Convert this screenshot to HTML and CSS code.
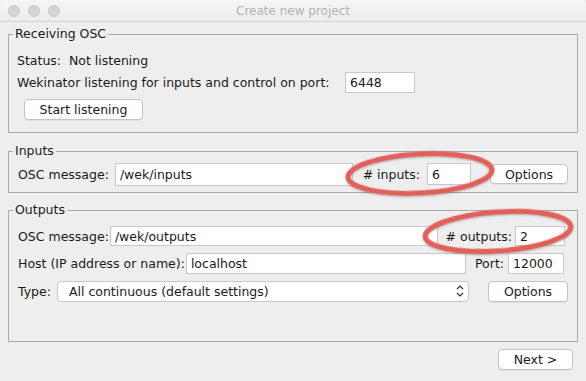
FILE: index.html
```html
<!DOCTYPE html>
<html lang="en">

<head>
    <meta charset="UTF-8">
    <title>Create new project</title>
    <link rel="stylesheet" href="styles.css">
</head>

<body>
    <div class="window">
        <div class="titlebar">
            <div class="lights">
                <span class="light"></span>
                <span class="light"></span>
                <span class="light"></span>
            </div>
            <div class="title">Create new project</div>
        </div>

        <fieldset class="group receiving">
            <legend>Receiving OSC</legend>
            <div class="row status">Status:&nbsp; Not listening</div>
            <div class="row">
                <span class="label wek">Wekinator listening for inputs and control on port:</span>
                <input class="field port-in" type="text" value="6448">
            </div>
            <div class="row btn-row">
                <button class="btn start">Start listening</button>
            </div>
        </fieldset>

        <fieldset class="group inputs">
            <legend>Inputs</legend>
            <div class="row">
                <span class="label first">OSC message:</span>
                <input class="field grow in-msg" type="text" value="/wek/inputs">
                <span class="label num-in">#&nbsp;inputs:</span>
                <input class="field num-field" type="text" value="6">
                <button class="btn opt-in">Options</button>
            </div>
        </fieldset>

        <fieldset class="group outputs">
            <legend>Outputs</legend>
            <div class="row">
                <span class="label first">OSC message:</span>
                <input class="field grow out-msg" type="text" value="/wek/outputs">
                <span class="label num-out">#&nbsp;outputs:</span>
                <input class="field num-out-field" type="text" value="2">
            </div>
            <div class="row">
                <span class="label first">Host (IP address or name):</span>
                <input class="field grow host" type="text" value="localhost">
                <span class="label port-label">Port:</span>
                <input class="field port-out" type="text" value="12000">
            </div>
            <div class="row">
                <span class="label first">Type:</span>
                <div class="select grow">
                    <span>All continuous (default settings)</span>
                    <svg class="chevron" width="8" height="14" viewBox="0 0 8 14">
                        <path d="M1 5 L4 2 L7 5 M1 9 L4 12 L7 9" fill="none" stroke="#333" stroke-width="1.2"/>
                    </svg>
                </div>
                <button class="btn opt-out">Options</button>
            </div>
        </fieldset>

        <div class="footer">
            <button class="btn next">Next &gt;</button>
        </div>

        <!-- red marks drawn over the screenshot -->
        <svg class="marks" width="586" height="381" viewBox="0 0 586 381">
            <ellipse cx="420" cy="173.5" rx="72" ry="19.5" transform="rotate(-3 420 173.5)" />
            <ellipse cx="498" cy="231.5" rx="73" ry="19.5" transform="rotate(-4 498 231.5)" />
        </svg>
    </div>
</body>

</html>
```

FILE: styles.css
```css
* {
    margin: 0;
    padding: 0;
    box-sizing: border-box;
}

body {
    background-color: #eeeeee;
    font-family: "DejaVu Sans", sans-serif;
    font-size: 12.5px;
    color: #1a1a1a;
}

.window {
    position: relative;
    width: 586px;
    height: 381px;
    background-color: #eeeeee;
    overflow: hidden;
}

.titlebar {
    position: relative;
    height: 22px;
    background: linear-gradient(#f6f6f6, #ececec);
    border-bottom: 1px solid #d2d2d2;
    border-radius: 5px 5px 0 0;
    display: flex;
    align-items: center;
    justify-content: center;
}

.lights {
    position: absolute;
    left: 8px;
    top: 5px;
    display: flex;
    gap: 8px;
}

.light {
    width: 12px;
    height: 12px;
    border-radius: 50%;
    background-color: #d4d4d4;
    border: 1px solid #c9c9c9;
}

.title {
    font-size: 12px;
    color: #b2b2b2;
}

/* titled borders */
.group {
    margin: 0 8px;
    border: 1px solid #aaaaaa;
    padding: 0 9px 0 8px;
}

.group legend {
    margin-left: -4px;
    padding: 0 2px;
    line-height: 16px;
    font-size: 12.5px;
}

.receiving {
    margin-top: 4px;
    padding-top: 7px;
    padding-bottom: 12px;
}

.inputs {
    margin-top: 10px;
    padding-top: 3px;
    padding-bottom: 6px;
}

.outputs {
    margin-top: 9px;
    padding-top: 7px;
    padding-bottom: 39px;
}

.row {
    display: flex;
    align-items: center;
    height: 22px;
}

.inputs .row {
    height: 24px;
}

.outputs .row + .row {
    margin-top: 5px;
}

.outputs .row:last-child {
    margin-top: 6px;
}

.label {
    white-space: nowrap;
}

.label.first {
    margin-left: 1px;
}

.wek {
    width: 328px;
}

.field {
    font-family: "DejaVu Sans", sans-serif;
    font-size: 12.5px;
    color: #1a1a1a;
    background-color: #ffffff;
    border: 1px solid #c8c8c8;
    height: 21px;
    padding: 0 4px;
    outline: none;
    min-width: 0;
}

.grow {
    flex: 1;
}

.port-in {
    width: 70px;
}

.btn-row {
    margin-top: 6px;
    height: 21px;
}

.btn {
    font-family: "DejaVu Sans", sans-serif;
    font-size: 12.5px;
    color: #1a1a1a;
    background-color: #ffffff;
    border: 1px solid #c4c4c4;
    border-radius: 4px;
    box-shadow: 0 1px 0 rgba(0, 0, 0, 0.06);
    height: 20px;
}

.start {
    width: 119px;
    height: 21px;
    margin-left: 7px;
}

.in-msg {
    margin-left: 6px;
    height: 23px;
}

.num-in {
    margin-left: 10px;
}

.num-field {
    width: 44px;
    height: 22px;
    margin-left: 7px;
}

.opt-in {
    width: 78px;
    margin-left: 19px;
}

.out-msg {
    margin-left: 1px;
    height: 20px;
}

.num-out {
    margin-left: 8px;
}

.num-out-field {
    width: 50px;
    height: 20px;
    margin-left: 3px;
    margin-right: 3px;
}

.host {
    margin-left: 1px;
    height: 21px;
}

.port-label {
    margin-left: 9px;
}

.port-out {
    width: 56px;
    height: 21px;
    margin-left: 4px;
    margin-right: 4px;
}

.select {
    margin-left: 6px;
    height: 21px;
    background-color: #ffffff;
    border: 1px solid #c8c8c8;
    border-radius: 4px;
    display: flex;
    align-items: center;
    justify-content: space-between;
    padding: 0 4px 0 11px;
}

.opt-out {
    width: 80px;
    margin-left: 19px;
    height: 21px;
}

.footer {
    display: flex;
    justify-content: flex-end;
    padding: 7px 13px 0 0;
}

.next {
    width: 75px;
    height: 21px;
}

.marks {
    position: absolute;
    top: 0;
    left: 0;
    pointer-events: none;
}

.marks ellipse {
    fill: none;
    stroke: #e3605a;
    stroke-width: 5;
    filter: drop-shadow(0 1px 1px rgba(0, 0, 0, 0.25));
}
```
